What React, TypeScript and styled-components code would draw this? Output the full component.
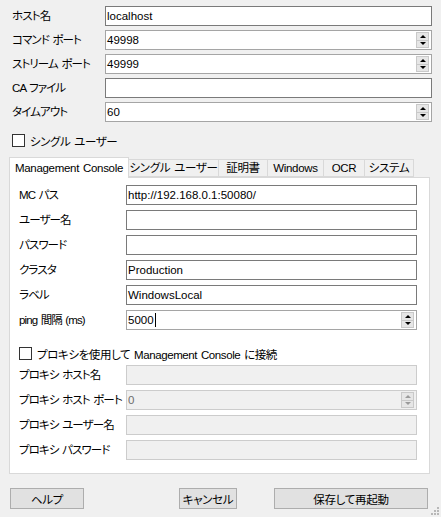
import React from "react";
import styled, { createGlobalStyle } from "styled-components";

const Global = createGlobalStyle`
  html, body { margin: 0; padding: 0; background: #f0f0f0; }
  body {
    font-family: "Liberation Sans", "Noto Sans CJK JP", sans-serif;
    font-size: 11px;
    font-feature-settings: "palt";
    color: #000;
  }
  * { box-sizing: border-box; }
`;

const Window = styled.div`
  width: 441px;
  height: 517px;
  position: relative;
  background: #f0f0f0;
  display: flex;
  flex-direction: column;
  overflow: hidden;
`;

const TopForm = styled.div`
  display: grid;
  grid-template-columns: 93px 327px;
  grid-auto-rows: 20px;
  row-gap: 4px;
  padding: 6px 0 0 12px;
  align-items: center;
`;

const Label = styled.div`
  white-space: pre;
  line-height: 20px;
  height: 20px;
  letter-spacing: -0.9px;
  word-spacing: 1.2px;
  font-size: 11.5px;
`;

const Field = styled.div<{ $disabled?: boolean; $dark?: boolean }>`
  height: 20px;
  display: flex;
  align-items: stretch;
  border: 1px solid ${(p) => (p.$disabled ? "#cccccc" : p.$dark ? "#7a7a7a" : "#a5a5a5")};
  background: ${(p) => (p.$disabled ? "#f0f0f0" : "#ffffff")};
  color: ${(p) => (p.$disabled ? "#6d6d6d" : "#000")};
`;

const FieldText = styled.div`
  flex: 1;
  padding-left: 1px;
  line-height: 18px;
  white-space: nowrap;
  display: flex;
  align-items: center;
  font-size: 11.5px;
`;

const Caret = styled.span`
  display: inline-block;
  width: 1px;
  height: 14px;
  background: #000;
  margin-left: 1px;
`;

const Spinner = styled.div`
  width: 13px;
  margin: 1px 2px 1px 0;
  display: flex;
  flex-direction: column;
  border: 1px solid #c9c9c9;
  background: #e6e6e6;
`;

const SpinHalf = styled.div<{ $down?: boolean }>`
  flex: 1;
  display: flex;
  align-items: center;
  justify-content: center;
  border-top: ${(p) => (p.$down ? "1px solid #c9c9c9" : "none")};
`;

const Arrow = styled.span<{ $down?: boolean; $disabled?: boolean }>`
  width: 0;
  height: 0;
  border-left: 3px solid transparent;
  border-right: 3px solid transparent;
  ${(p) =>
    p.$down
      ? `border-top: 3px solid ${p.$disabled ? "#9a9a9a" : "#000"};`
      : `border-bottom: 3px solid ${p.$disabled ? "#9a9a9a" : "#000"};`}
`;

const CheckRow = styled.label<{ $mt: number; $ml?: number }>`
  display: flex;
  align-items: center;
  gap: 5px;
  height: 13px;
  margin-top: ${(p) => p.$mt}px;
  margin-left: ${(p) => p.$ml ?? 0}px;
  white-space: pre;
  letter-spacing: -0.4px;
  word-spacing: 1px;
  font-size: 11.5px;
`;

const CheckBox = styled.span`
  width: 13px;
  height: 13px;
  border: 1px solid #333333;
  background: #fff;
  flex: none;
`;

const Tabs = styled.div`
  margin: 10px 0 0 9px;
  width: 421px;
  display: flex;
  flex-direction: column;
`;

const TabStrip = styled.div`
  display: flex;
  align-items: flex-end;
  height: 20px;
  position: relative;
  z-index: 1;
`;

const Tab = styled.div<{ $w: number; $active?: boolean }>`
  width: ${(p) => p.$w}px;
  height: ${(p) => (p.$active ? 21 : 18)}px;
  margin-bottom: ${(p) => (p.$active ? -1 : 0)}px;
  margin-left: -1px;
  &:first-child { margin-left: 0; }
  border: 1px solid #d9d9d9;
  border-bottom: ${(p) => (p.$active ? "none" : "1px solid #d9d9d9")};
  background: ${(p) => (p.$active ? "#ffffff" : "#f0f0f0")};
  display: flex;
  align-items: ${(p) => (p.$active ? "flex-start" : "center")};
  justify-content: center;
  padding-top: ${(p) => (p.$active ? 2 : 0)}px;
  white-space: pre;
  line-height: 16px;
  letter-spacing: -0.3px;
  word-spacing: 1px;
  font-size: 11.5px;
`;

const Panel = styled.div`
  height: 297px;
  border: 1px solid #d9d9d9;
  background: #ffffff;
  padding: 7px 12px 0 9px;
  display: flex;
  flex-direction: column;
`;

const PanelForm = styled.div<{ $mt?: number }>`
  display: grid;
  grid-template-columns: 107px 291px;
  grid-auto-rows: 20px;
  row-gap: 5px;
  align-items: center;
  margin-top: ${(p) => p.$mt ?? 0}px;
`;

const ButtonBar = styled.div`
  display: flex;
  align-items: center;
  margin-top: 14px;
  padding: 0 13px 0 10px;
`;

const Button = styled.div<{ $w: number }>`
  width: ${(p) => p.$w}px;
  height: 21px;
  border: 1px solid #adadad;
  background: #e1e1e1;
  display: flex;
  align-items: center;
  justify-content: center;
  white-space: nowrap;
  font-size: 11.5px;
  letter-spacing: -0.3px;
`;

const Spacer = styled.div`
  flex: 1;
`;

const Gap = styled.div<{ $w: number }>`
  width: ${(p) => p.$w}px;
`;

const Grip = styled.svg`
  position: absolute;
  right: 1px;
  bottom: 1px;
`;

type FieldProps = {
  value?: string;
  spin?: boolean;
  disabled?: boolean;
  dark?: boolean;
  caret?: boolean;
};

function Input({ value = "", spin, disabled, dark, caret }: FieldProps) {
  return (
    <Field $disabled={disabled} $dark={dark}>
      <FieldText>
        {value}
        {caret && <Caret />}
      </FieldText>
      {spin && (
        <Spinner>
          <SpinHalf>
            <Arrow $disabled={disabled} />
          </SpinHalf>
          <SpinHalf $down>
            <Arrow $down $disabled={disabled} />
          </SpinHalf>
        </Spinner>
      )}
    </Field>
  );
}

const tabs = [
  { label: "Management Console", w: 120, active: true },
  { label: "シングル ユーザー", w: 91 },
  { label: "証明書", w: 50 },
  { label: "Windows", w: 57 },
  { label: "OCR", w: 42 },
  { label: "システム", w: 50 },
];

export default function App() {
  return (
    <Window>
      <Global />
      <TopForm>
        <Label>ホスト名</Label>
        <Input value="localhost" dark />
        <Label>コマンド ポート</Label>
        <Input value="49998" spin />
        <Label>ストリーム ポート</Label>
        <Input value="49999" spin />
        <Label>CA ファイル</Label>
        <Input dark />
        <Label>タイムアウト</Label>
        <Input value="60" spin />
      </TopForm>
      <CheckRow $mt={12} $ml={12}>
        <CheckBox />
        シングル ユーザー
      </CheckRow>
      <Tabs>
        <TabStrip>
          {tabs.map((t) => (
            <Tab key={t.label} $w={t.w} $active={t.active}>
              {t.label}
            </Tab>
          ))}
        </TabStrip>
        <Panel>
          <PanelForm>
            <Label>MC パス</Label>
            <Input value="http://192.168.0.1:50080/" dark />
            <Label>ユーザー名</Label>
            <Input dark />
            <Label>パスワード</Label>
            <Input dark />
            <Label>クラスタ</Label>
            <Input value="Production" dark />
            <Label>ラベル</Label>
            <Input value="WindowsLocal" dark />
            <Label>ping 間隔 (ms)</Label>
            <Input value="5000" spin caret />
          </PanelForm>
          <CheckRow $mt={17}>
            <CheckBox />
            プロキシを使用して Management Console に接続
          </CheckRow>
          <PanelForm $mt={5}>
            <Label>プロキシ ホスト名</Label>
            <Input disabled />
            <Label>プロキシ ホスト ポート</Label>
            <Input value="0" spin disabled />
            <Label>プロキシ ユーザー名</Label>
            <Input disabled />
            <Label>プロキシ パスワード</Label>
            <Input disabled />
          </PanelForm>
        </Panel>
      </Tabs>
      <ButtonBar>
        <Button $w={74}>ヘルプ</Button>
        <Spacer />
        <Button $w={58}>キャンセル</Button>
        <Gap $w={37} />
        <Button $w={154}>保存して再起動</Button>
      </ButtonBar>
      <Grip width="9" height="9" viewBox="0 0 9 9">
        {[
          [6, 0],
          [6, 3],
          [3, 3],
          [6, 6],
          [3, 6],
          [0, 6],
        ].map(([x, y]) => (
          <rect key={`${x}-${y}`} x={x} y={y} width="2" height="2" fill="#b8b8b8" />
        ))}
      </Grip>
    </Window>
  );
}
